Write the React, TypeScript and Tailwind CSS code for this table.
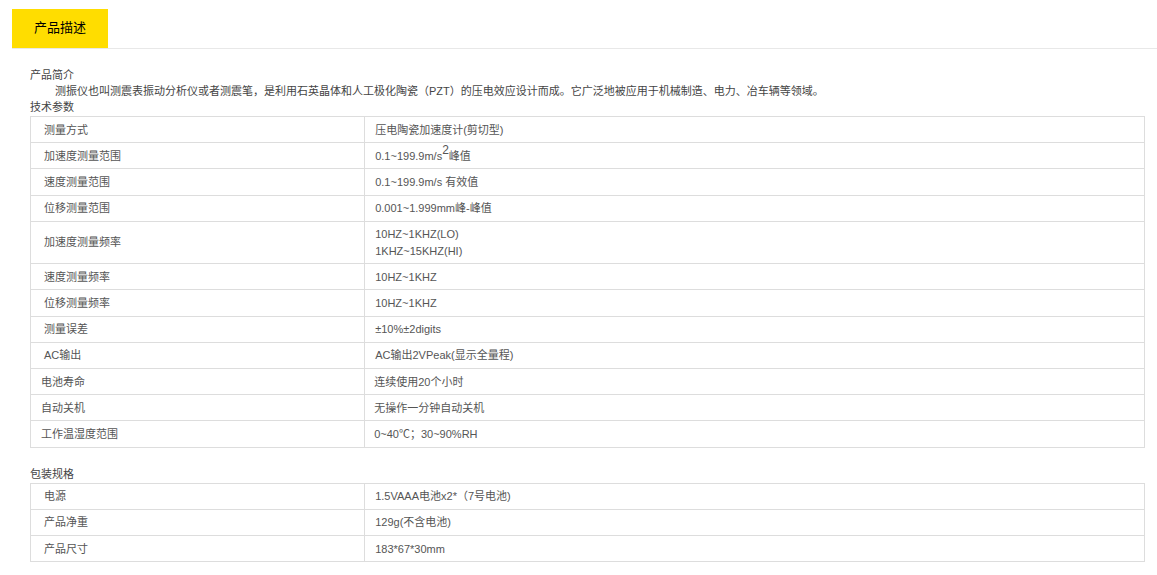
import React from "react";

type Row = { label: string; value: React.ReactNode; tight?: boolean };

const specs: Row[] = [
  { label: "测量方式", value: "压电陶瓷加速度计(剪切型)" },
  {
    label: "加速度测量范围",
    value: (
      <>
        0.1~199.9m/s<sup className="text-[12px] leading-none">2</sup>峰值
      </>
    ),
  },
  { label: "速度测量范围", value: "0.1~199.9m/s 有效值" },
  { label: "位移测量范围", value: "0.001~1.999mm峰-峰值" },
  {
    label: "加速度测量频率",
    value: (
      <>
        10HZ~1KHZ(LO)
        <br />
        1KHZ~15KHZ(HI)
      </>
    ),
  },
  { label: "速度测量频率", value: "10HZ~1KHZ" },
  { label: "位移测量频率", value: "10HZ~1KHZ" },
  { label: "测量误差", value: "±10%±2digits" },
  { label: "AC输出", value: "AC输出2VPeak(显示全量程)" },
  { label: "电池寿命", value: "连续使用20个小时", tight: true },
  { label: "自动关机", value: "无操作一分钟自动关机", tight: true },
  { label: "工作温湿度范围", value: "0~40℃；30~90%RH", tight: true },
];

const pack: Row[] = [
  { label: "电源", value: "1.5VAAA电池x2*（7号电池)" },
  { label: "产品净重", value: "129g(不含电池)" },
  { label: "产品尺寸", value: "183*67*30mm" },
];

function SpecTable({ rows }: { rows: Row[] }) {
  return (
    <table className="w-full border-collapse border border-[#dddddd] table-fixed text-[#555555]">
      <tbody>
        {rows.map((r, i) => (
          <tr key={i}>
            <td
              className={
                r.tight
                  ? "w-[30%] border border-[#dddddd] pl-[10px] py-[4.5px] leading-[16.2px] align-middle"
                  : "w-[30%] border border-[#dddddd] pl-[13px] py-[4.5px] leading-[16.2px] align-middle"
              }
            >
              {r.label}
            </td>
            <td
              className={
                r.tight
                  ? "border border-[#dddddd] pl-[9px] py-[4.5px] leading-[16.2px] align-middle"
                  : "border border-[#dddddd] pl-[10px] py-[4.5px] leading-[16.2px] align-middle"
              }
            >
              {r.value}
            </td>
          </tr>
        ))}
      </tbody>
    </table>
  );
}

export default function App() {
  return (
    <div
      className="w-[1157px] h-[575px] bg-white text-[11px] text-[#444444] overflow-hidden"
      style={{ fontFamily: '"Liberation Sans", "Noto Sans CJK SC", sans-serif' }}
    >
      <div className="pt-[9px] pl-3">
        <div className="flex border-b border-[#e8e8e8]">
          <div className="w-24 h-[39px] pb-px bg-[#ffdd00] flex items-center justify-center text-[13px] text-black">
            产品描述
          </div>
        </div>
      </div>

      <div className="pl-[30px] pr-[12px] pt-[18px]">
        <div className="leading-4">产品简介</div>
        <div className="leading-4 pl-[25px]">
          测振仪也叫测震表振动分析仪或者测震笔，是利用石英晶体和人工极化陶瓷（PZT）的压电效应设计而成。它广泛地被应用于机械制造、电力、冶车辆等领域。
        </div>
        <div className="leading-4 mb-[1px]">技术参数</div>
        <SpecTable rows={specs} />

        <div className="leading-4 mt-[18px] mb-[1px]">包装规格</div>
        <SpecTable rows={pack} />
      </div>
    </div>
  );
}
